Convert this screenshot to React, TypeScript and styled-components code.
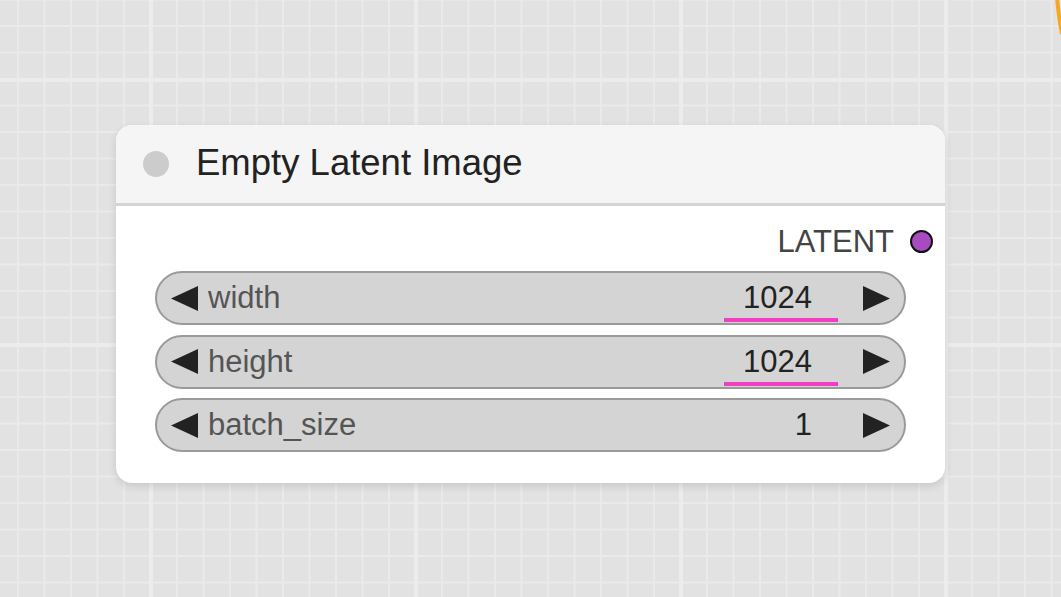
import styled, { createGlobalStyle } from "styled-components";

const GlobalStyle = createGlobalStyle`
  html, body {
    margin: 0;
    padding: 0;
    overflow: hidden;
  }
  body {
    font-family: "Liberation Sans", Arial, sans-serif;
  }
`;

interface Widget {
  name: string;
  value: number;
  edited?: boolean;
}

const widgets: Widget[] = [
  { name: "width", value: 1024, edited: true },
  { name: "height", value: 1024, edited: true },
  { name: "batch_size", value: 1 },
];

const ArrowLeft = () => (
  <svg width="27" height="25" viewBox="0 0 27 25">
    <polygon points="27,0 27,25 0,12.5" fill="#222" />
  </svg>
);

const ArrowRight = () => (
  <svg width="27" height="25" viewBox="0 0 27 25">
    <polygon points="0,0 0,25 27,12.5" fill="#222" />
  </svg>
);

const App = () => {
  return (
    <Canvas>
      <GlobalStyle />
      <Wire width="10" height="40" viewBox="0 0 10 40">
        <path d="M 6 -4 Q 7 12 11 34" stroke="#f5a623" strokeWidth="4" fill="none" />
      </Wire>
      <Node>
        <Header>
          <Dot />
          <Title>Empty Latent Image</Title>
        </Header>
        <Body>
          <OutputRow>
            <OutputLabel>LATENT</OutputLabel>
            <Slot />
          </OutputRow>
          {widgets.map((w) => (
            <WidgetRow key={w.name}>
              <ArrowLeft />
              <Label>{w.name}</Label>
              <Value $edited={w.edited}>{w.value}</Value>
              <ArrowRight />
            </WidgetRow>
          ))}
        </Body>
      </Node>
    </Canvas>
  );
};

const Canvas = styled.div`
  position: relative;
  width: 1061px;
  height: 597px;
  overflow: hidden;
  background-color: #e2e2e2;
  background-image: linear-gradient(to right, #ececec 4px, transparent 4px),
    linear-gradient(to bottom, #ececec 4px, transparent 4px),
    linear-gradient(to right, #eaeaea 2px, transparent 2px),
    linear-gradient(to bottom, #eaeaea 2px, transparent 2px);
  background-size: 265px 265px, 265px 265px, 26.5px 26.5px, 26.5px 26.5px;
  background-position: 149px 0, 0 78px, 17px 0, 0 25px;
`;

const Wire = styled.svg`
  position: absolute;
  top: 0;
  right: 0;
`;

const Node = styled.div`
  position: absolute;
  left: 116px;
  top: 125px;
  width: 829px;
  height: 358px;
  background: #ffffff;
  border-radius: 16px;
  box-shadow: 0 3px 8px rgba(0, 0, 0, 0.12);
  overflow: hidden;
  display: flex;
  flex-direction: column;
`;

const Header = styled.div`
  height: 78px;
  background: #f5f5f5;
  border-bottom: 3px solid #d4d4d4;
  display: flex;
  align-items: center;
  padding-left: 27px;
  gap: 27px;
`;

const Dot = styled.div`
  width: 26px;
  height: 26px;
  border-radius: 50%;
  background: #cccccc;
`;

const Title = styled.div`
  font-size: 36.5px;
  color: #222;
  padding-bottom: 2px;
`;

const Body = styled.div`
  padding: 17px 39px 0;
  display: flex;
  flex-direction: column;
  gap: 9.5px;
`;

const OutputRow = styled.div`
  height: 37px;
  display: flex;
  align-items: center;
  justify-content: flex-end;
  gap: 16px;
  margin-right: -27px;
  margin-bottom: 1.5px;
`;

const OutputLabel = styled.span`
  font-size: 31px;
  color: #444;
`;

const Slot = styled.div`
  width: 19px;
  height: 19px;
  border-radius: 50%;
  background: #a84bc1;
  border: 2.5px solid #111;
`;

const WidgetRow = styled.div`
  box-sizing: border-box;
  height: 54px;
  border: 2.5px solid #9a9a9a;
  border-radius: 30px;
  background: #d4d4d4;
  display: flex;
  align-items: center;
  padding: 0 14px 0 14px;
`;

const Label = styled.span`
  flex: 1;
  font-size: 31px;
  color: #555;
  margin-left: 10px;
`;

const Value = styled.span<{ $edited?: boolean }>`
  font-size: 31px;
  color: #222;
  padding: 0 26px 2px 19px;
  margin-right: 25px;
  margin-top: 6px;
  border-bottom: 4px solid ${(p) => (p.$edited ? "#f23ec3" : "transparent")};
`;

export default App;
